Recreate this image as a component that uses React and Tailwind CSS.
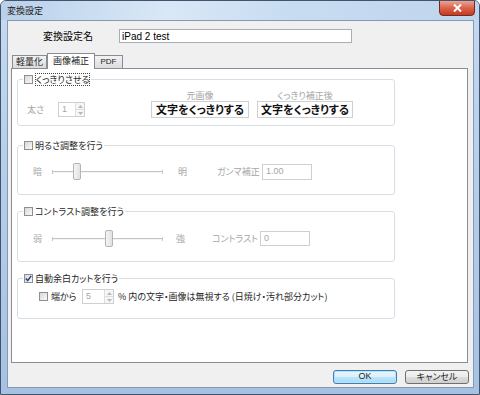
import React from "react";

const jp = "font-['Noto_Sans_CJK_JP','Noto_Sans',sans-serif] [font-feature-settings:'palt']";

const CheckBox = ({ checked }) => (
  <span className="inline-flex h-[9px] w-[9px] shrink-0 items-center justify-center border border-[#8e8f8f] bg-[linear-gradient(135deg,#d8d8d8,#fafafa)]">
    {checked && (
      <svg width="7" height="7" viewBox="0 0 7 7">
        <path d="M0.8 3.6 L2.7 5.6 L6.2 0.9" fill="none" stroke="#2b3f86" strokeWidth="1.5" />
      </svg>
    )}
  </span>
);

const Spinner = ({ value, width }) => (
  <div className={`flex h-[15px] shrink-0 border border-[#cfcfcf] bg-white ${width}`}>
    <span className="flex-1 pl-[3px] font-['Liberation_Sans',sans-serif] text-[9px] leading-[13px] text-[#a6a6a6]">{value}</span>
    <div className="flex w-[9px] flex-col border-l border-[#dedede]">
      <span className="flex flex-1 items-center justify-center border-b border-[#dedede] bg-[#f6f6f6]">
        <svg width="5" height="3" viewBox="0 0 5 3"><path d="M0 3 L2.5 0 L5 3 Z" fill="#b8b8b8" /></svg>
      </span>
      <span className="flex flex-1 items-center justify-center bg-[#f6f6f6]">
        <svg width="5" height="3" viewBox="0 0 5 3"><path d="M0 0 L2.5 3 L5 0 Z" fill="#b8b8b8" /></svg>
      </span>
    </div>
  </div>
);

const Slider = ({ thumb }) => (
  <div className="relative h-[17px] w-[120px] shrink-0">
    <div className="absolute left-[6px] right-[3px] top-[8px] h-[2px] border-t border-b border-t-[#c4c4c4] border-b-[#f4f4f4]" />
    <div className="absolute left-[6px] top-[7px] h-[4px] w-px bg-[#c8c8c8]" />
    <div className="absolute right-[3px] top-[7px] h-[4px] w-px bg-[#c8c8c8]" />
    <div className={`absolute top-0 h-[17px] w-[8px] rounded-[2px] border border-[#b4b4b4] bg-[linear-gradient(90deg,#f4f4f4,#e2e2e2)] ${thumb}`} />
  </div>
);

const Group = ({ label, checked, focus, className, children }) => (
  <fieldset className={`ml-[5px] w-[378px] rounded-[3px] border border-[#d5dfe5] ${className}`}>
    <legend className="ml-[5px] px-[1px]">
      <span className="flex h-[12px] items-center gap-[2px]">
        <CheckBox checked={checked} />
        <span className={`text-[9px] leading-[11px] text-[#1e1e1e] ${focus ? "border border-dotted border-[#444]" : ""}`}>{label}</span>
      </span>
    </legend>
    {children}
  </fieldset>
);

export default function App() {
  return (
    <div className={`h-[395px] w-[480px] overflow-hidden whitespace-nowrap rounded-t-[6px] border border-[#40536f] bg-[linear-gradient(180deg,#c6daf0,#b7cfe9_40%,#a7c1e2)] ${jp}`}>
      {/* title bar */}
      <div className="flex h-[19px] items-start justify-between bg-[linear-gradient(100deg,#b9d0ea,#d9e8f7_35%,#c8dcf1_60%,#bfd5ed)]">
        <span className="pl-[6px] pt-[4px] text-[9px] leading-[11px] text-[#1b1b1b]">変換設定</span>
        <div className="-mt-px mr-[4px] flex h-[16px] w-[36px] items-center justify-center rounded-b-[4px] border border-[#73291f] bg-[linear-gradient(180deg,#eda593,#d9634a_50%,#c43a20)]">
          <svg width="9" height="8" viewBox="0 0 9 8">
            <path d="M1 0.5 L8 7.5 M8 0.5 L1 7.5" stroke="#fff" strokeWidth="2" />
          </svg>
        </div>
      </div>

      {/* client area */}
      <div className="ml-[6px] mr-[5px] h-[368px] border border-[#8399b4] bg-[#f0f0f0]">
        <div className="mt-[8px] flex h-[14px] items-center pl-[35px]">
          <span className="w-[76px] text-[10px] leading-[12px] text-black">変換設定名</span>
          <div className="flex h-[14px] w-[233px] items-center border border-[#abadb3] bg-white pl-[2px] font-['Liberation_Sans',sans-serif] text-[10px] text-black">
            iPad 2 test
          </div>
        </div>

        {/* tabs */}
        <div className="mt-[10px] ml-[3px] flex h-[15px] items-end pl-[1px]">
          <div className="flex h-[13px] w-[35px] items-center justify-center border border-b-0 border-[#898c95] bg-[linear-gradient(180deg,#f2f2f2,#dcdcdc)] text-[9px] text-[#1e1e1e]">
            軽量化
          </div>
          <div className="relative z-10 -mb-px flex h-[16px] w-[48px] items-start justify-center border border-b-0 border-[#898c95] bg-white pt-[1px] text-[9px] leading-[11px] text-[#1e1e1e]">
            画像補正
          </div>
          <div className="flex h-[13px] w-[28px] items-center justify-center border border-b-0 border-l-0 border-[#898c95] bg-[linear-gradient(180deg,#f2f2f2,#dcdcdc)] font-['Liberation_Sans',sans-serif] text-[8px] text-[#1e1e1e]">
            PDF
          </div>
        </div>

        {/* panel */}
        <div className="ml-[3px] h-[295px] w-[457px] border border-[#898c95] bg-white pt-[4px]">
          <Group label="くっきりさせる" focus className="h-[53px]">
            <div className="mt-[5px] flex items-end pl-[9px]">
              <div className="flex h-[17px] w-[124px] items-center">
                <span className="w-[31px] text-[9px] text-[#a6a6a6]">太さ</span>
                <Spinner value="1" width="w-[27px]" />
              </div>
              <div className="flex w-[98px] flex-col items-center">
                <span className="text-[9px] leading-[11px] text-[#a6a6a6]">元画像</span>
                <div className="flex h-[17px] w-[98px] items-center justify-center border border-[#cfcfcf] text-[11px] font-bold leading-[15px] text-[#111]">
                  文字をくっきりする
                </div>
              </div>
              <div className="ml-[8px] flex w-[96px] flex-col items-center">
                <span className="text-[9px] leading-[11px] text-[#a6a6a6]">くっきり補正後</span>
                <div className="flex h-[17px] w-[96px] items-center justify-center border border-[#cfcfcf] text-[11px] font-bold leading-[15px] text-[#111]">
                  文字をくっきりする
                </div>
              </div>
            </div>
          </Group>

          <Group label="明るさ調整を行う" className="mt-[13px] h-[56px]">
            <div className="mt-[12px] flex items-center pl-[15px] text-[9px] text-[#a6a6a6]">
              <span className="w-[13px]">暗</span>
              <Slider thumb="left-[27px]" />
              <span className="ml-[12px] w-[10px]">明</span>
              <span className="ml-[29px] w-[45px]">ガンマ補正</span>
              <div className="flex h-[16px] w-[50px] items-center border border-[#cfcfcf] pl-[3px] font-['Liberation_Sans',sans-serif] text-[9px] text-[#a6a6a6]">
                1.00
              </div>
            </div>
          </Group>

          <Group label="コントラスト調整を行う" className="mt-[10px] h-[57px]">
            <div className="mt-[13px] flex items-center pl-[15px] text-[9px] text-[#a6a6a6]">
              <span className="w-[13px]">弱</span>
              <Slider thumb="left-[59px]" />
              <span className="ml-[10px] w-[12px]">強</span>
              <span className="ml-[24px] w-[48px]">コントラスト</span>
              <div className="flex h-[15px] w-[50px] items-center border border-[#cfcfcf] pl-[3px] font-['Liberation_Sans',sans-serif] text-[9px] text-[#a6a6a6]">
                0
              </div>
            </div>
          </Group>

          <Group label="自動余白カットを行う" checked className="mt-[10px] h-[47px]">
            <div className="mt-[5px] flex items-center pl-[21px] text-[9px] text-[#1e1e1e]">
              <CheckBox />
              <span className="ml-[3px] w-[31px]">端から</span>
              <Spinner value="5" width="w-[32px]" />
              <span className="ml-[4px]">% 内の文字・画像は無視する (日焼け・汚れ部分カット)</span>
            </div>
          </Group>
        </div>

        {/* buttons */}
        <div className="mt-[7px] mr-[4px] flex justify-end gap-[8px]">
          <button className="flex h-[14px] w-[64px] items-center justify-center rounded-[3px] border border-[#3c7fb1] bg-[linear-gradient(180deg,#eaf6fd,#d9f0fc_50%,#bee6fd_50%,#a7d9f5)] font-['Liberation_Sans',sans-serif] text-[9px] text-[#1e1e1e] shadow-[inset_0_0_0_1px_#b8e1f7]">
            OK
          </button>
          <button className="flex h-[14px] w-[64px] items-center justify-center rounded-[3px] border border-[#707070] bg-[linear-gradient(180deg,#f2f2f2,#ebebeb_50%,#dddddd_50%,#cfcfcf)] text-[9px] text-[#1e1e1e]">
            キャンセル
          </button>
        </div>
      </div>
    </div>
  );
}
